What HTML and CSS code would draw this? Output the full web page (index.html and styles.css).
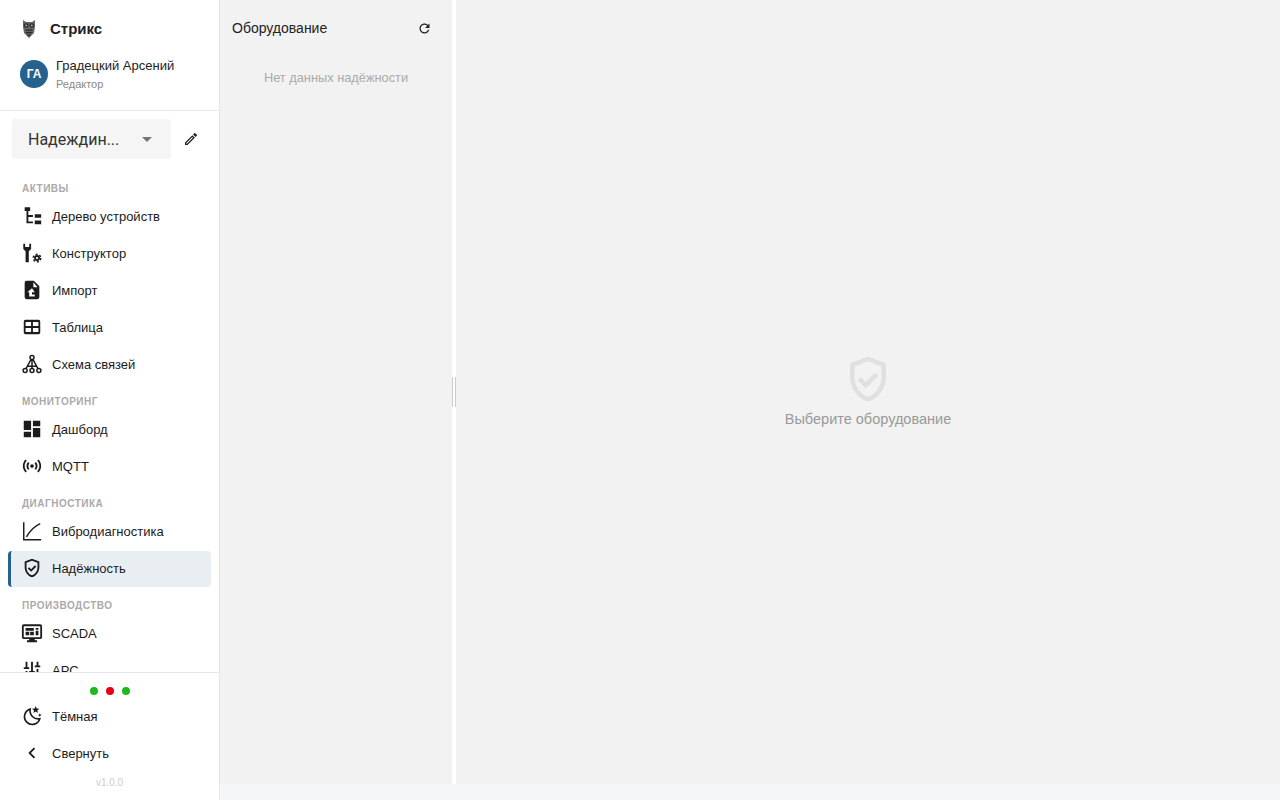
FILE: index.html
```html
<!DOCTYPE html>
<html lang="ru">
<head>
    <meta charset="UTF-8">
    <title>Стрикс</title>
    <link rel="stylesheet" href="styles.css">
</head>
<body>
    <aside class="sidebar">
        <div class="top">
            <div class="brand">
                <svg class="owl" viewBox="0 0 16 20">
                    <path fill="#666" d="M2 1l3 2h6l3-2v7l-1 6-5 5-5-5-1-6z"/>
                    <circle cx="5.200" cy="6.500" r="2.300" fill="#2a2a2a"/>
                    <circle cx="10.800" cy="6.500" r="2.300" fill="#2a2a2a"/>
                    <circle cx="5.200" cy="6.500" r=".9" fill="#bbb"/>
                    <circle cx="10.800" cy="6.500" r=".9" fill="#bbb"/>
                    <path fill="#2a2a2a" d="M4 10.500h8l-1 1.200H5zM4.500 13h7l-1 1.200h-5zM6 15.500h4L8 17.500z"/>
                </svg>
                <span class="brand-name">Стрикс</span>
            </div>
            <div class="user">
                <div class="avatar">ГА</div>
                <div class="user-info">
                    <div class="user-name">Градецкий Арсений</div>
                    <div class="user-role">Редактор</div>
                </div>
            </div>
        </div>

        <div class="plant-row">
            <div class="plant-select">
                <span>Надеждин...</span>
                <i class="caret"></i>
            </div>
            <svg class="edit-icon" viewBox="0 0 24 24"><path d="M14.060 9.020l.92.92L5.920 19H5v-.92l9.060-9.060M17.660 3c-.25 0-.51.1-.7.29l-1.830 1.830 3.750 3.750 1.830-1.830c.39-.39.39-1.020 0-1.410l-2.340-2.340c-.2-.2-.45-.29-.71-.29zm-3.600 3.190L3 17.250V21h3.750L17.810 9.940l-3.750-3.750z"/></svg>
        </div>

        <nav class="nav">
            <div class="nav-label">Активы</div>
            <a class="nav-item">
                <svg class="ico" viewBox="0 0 24 24"><path d="M4 2.500h6v4H8v4.500h5v2H8v5h5v2H6V6.500H4zM15 10h7v4h-7zM15 17h7v4h-7z"/></svg>
                Дерево устройств
            </a>
            <a class="nav-item">
                <svg class="ico" viewBox="0 0 24 24">
                    <path d="M2.500 2v5.500l2.500 2.500v12h3.500V10L11 7.500V2H9v3.500H4.500V2z"/>
                    <circle cx="17.500" cy="17.500" r="2.200" fill="none" stroke="#1c1c1c" stroke-width="2"/>
                    <circle cx="17.500" cy="17.500" r="4" fill="none" stroke="#1c1c1c" stroke-width="1.800" stroke-dasharray="2.200 2"/>
                </svg>
                Конструктор
            </a>
            <a class="nav-item">
                <svg class="ico" viewBox="0 0 24 24"><path fill-rule="evenodd" d="M6 2h8l6 6v12a2 2 0 0 1-2 2H6a2 2 0 0 1-2-2V4a2 2 0 0 1 2-2zM13.500 3.500V9H18zM12 10l-5 4.500h2V19h6v-2h-3v-2.500h3z"/></svg>
                Импорт
            </a>
            <a class="nav-item">
                <svg class="ico" viewBox="0 0 24 24"><path fill-rule="evenodd" d="M5 4h14a2 2 0 0 1 2 2v12a2 2 0 0 1-2 2H5a2 2 0 0 1-2-2V6a2 2 0 0 1 2-2zm0 2.500V11h6V6.500zm8 0V11h6V6.500zM5 13v4.500h6V13zm8 0v4.500h6V13z"/></svg>
                Таблица
            </a>
            <a class="nav-item">
                <svg class="ico ico-line" viewBox="0 0 24 24">
                    <circle cx="12" cy="5" r="2.200"/>
                    <circle cx="4.500" cy="19" r="2.200"/>
                    <circle cx="12" cy="19" r="2.200"/>
                    <circle cx="19.500" cy="19" r="2.200"/>
                    <path d="M11 7L5.500 17M13 7l5.500 10M12 7.200v9.600M7.500 14.500h9"/>
                </svg>
                Схема связей
            </a>

            <div class="nav-label">Мониторинг</div>
            <a class="nav-item">
                <svg class="ico" viewBox="0 0 24 24"><path d="M3 13h8V3H3v10zm0 8h8v-6H3v6zm10 0h8V11h-8v10zm0-18v6h8V3h-8z"/></svg>
                Дашборд
            </a>
            <a class="nav-item">
                <svg class="ico" viewBox="0 0 24 24"><path d="M7.760 16.240C6.670 15.160 6 13.660 6 12s.67-3.160 1.760-4.240l1.420 1.420C8.450 9.900 8 10.900 8 12c0 1.100.45 2.100 1.170 2.830l-1.410 1.410zm8.480 0C17.330 15.160 18 13.660 18 12s-.67-3.160-1.760-4.240l-1.420 1.420C15.550 9.900 16 10.900 16 12c0 1.100-.45 2.100-1.170 2.830l1.410 1.410zM12 10c-1.100 0-2 .9-2 2s.9 2 2 2 2-.9 2-2-.9-2-2-2zm8 2c0 2.210-.9 4.210-2.350 5.650l1.420 1.420C20.880 17.260 22 14.760 22 12s-1.120-5.260-2.930-7.070l-1.420 1.420C19.100 7.790 20 9.790 20 12zM6.350 6.350 4.930 4.930C3.120 6.740 2 9.240 2 12s1.120 5.260 2.930 7.070l1.420-1.420C4.900 16.210 4 14.210 4 12s.9-4.210 2.350-5.650z"/></svg>
                MQTT
            </a>

            <div class="nav-label">Диагностика</div>
            <a class="nav-item">
                <svg class="ico ico-line" viewBox="0 0 24 24">
                    <path d="M3 2.500V21.500h19"/>
                    <path d="M6 18.500C9 13 13 7.500 21 4"/>
                </svg>
                Вибродиагностика
            </a>
            <a class="nav-item active">
                <svg class="ico" viewBox="0 0 24 24"><path d="M12 2 4 5v6.090c0 5.050 3.410 9.760 8 10.910 4.590-1.150 8-5.860 8-10.910V5l-8-3zm6 9.090c0 4-2.550 7.700-6 8.830-3.450-1.130-6-4.820-6-8.830v-4.700l6-2.250 6 2.250v4.700zm-9.180.09L7.400 12.600 11 16.200l5.660-5.660-1.420-1.410-4.240 4.240-2.180-2.190z"/></svg>
                Надёжность
            </a>

            <div class="nav-label">Производство</div>
            <a class="nav-item">
                <svg class="ico" viewBox="0 0 24 24"><path fill-rule="evenodd" d="M3 2.500h18a2 2 0 0 1 2 2v12a2 2 0 0 1-2 2h-6v1.500h2.500v2h-11v-2H9v-1.500H3a2 2 0 0 1-2-2v-12a2 2 0 0 1 2-2zm0 2v12h18v-12zM5 6.500h9v3H5zM5 10.500h4v4H5zM10 10.500h4v4h-4zM16 6.500h3v2h-3zM16 9.500h3v5h-3z"/></svg>
                SCADA
            </a>
            <a class="nav-item">
                <svg class="ico" viewBox="0 0 24 24"><path d="M5 3h2v6h2v2H3V9h2zM5 13h2v8H5zM11 3h2v10h2v2H9v-2h2zM11 17h2v4h-2zM17 3h2v4h2v2h-6V7h2zM17 11h2v10h-2z"/></svg>
                APC
            </a>
        </nav>

        <div class="bottom">
            <div class="status">
                <i class="dot green"></i>
                <i class="dot red"></i>
                <i class="dot green"></i>
            </div>
            <a class="nav-item">
                <svg class="ico" viewBox="0 0 24 24">
                    <path d="M10 4.500a8.500 8.500 0 1 0 10.500 10.500A9 9 0 0 1 10 4.500z" fill="none" stroke="#1c1c1c" stroke-width="1.800"/>
                    <path d="M16 1l1.100 2.800 2.900.2-2.200 1.900.7 2.900-2.500-1.600-2.500 1.600.7-2.900L12 4l2.900-.2zM20.500 9l.6 1.400 1.400.6-1.400.6-.6 1.400-.6-1.400-1.400-.6 1.400-.6z"/>
                </svg>
                Тёмная
            </a>
            <a class="nav-item">
                <svg class="ico" viewBox="0 0 24 24"><path d="M15.410 7.410 14 6l-6 6 6 6 1.410-1.410L10.830 12z"/></svg>
                Свернуть
            </a>
            <div class="version">v1.0.0</div>
        </div>
    </aside>

    <div class="workspace">
        <section class="panel">
            <div class="panel-head">
                <span>Оборудование</span>
                <svg class="refresh" viewBox="0 0 24 24"><path d="M17.650 6.350C16.200 4.900 14.210 4 12 4c-4.420 0-7.990 3.580-7.990 8s3.570 8 7.990 8c3.730 0 6.840-2.550 7.730-6h-2.080c-.82 2.330-3.040 4-5.650 4-3.310 0-6-2.690-6-6s2.690-6 6-6c1.660 0 3.140.69 4.220 1.780L13 11h7V4l-2.350 2.350z"/></svg>
            </div>
            <div class="panel-empty">Нет данных надёжности</div>
        </section>
        <div class="splitter"><i class="grip"></i></div>
        <main class="main">
            <svg class="shield" viewBox="0 0 24 24"><path d="M12 2 4 5v6.090c0 5.050 3.410 9.760 8 10.910 4.590-1.150 8-5.860 8-10.910V5l-8-3zm6 9.090c0 4-2.550 7.700-6 8.830-3.450-1.130-6-4.820-6-8.830v-4.700l6-2.250 6 2.250v4.700zm-9.180.09L7.400 12.600 11 16.200l5.660-5.660-1.420-1.410-4.240 4.240-2.180-2.190z"/></svg>
            <div class="main-text">Выберите оборудование</div>
        </main>
    </div>
</body>
</html>
```

FILE: styles.css
```css
* { box-sizing: border-box; }
html, body { height: 100%; }
body {
    margin: 0; display: flex; height: 800px; overflow: hidden;
    background: #f5f6f8; color: #1c1c1c;
    font-family: "Liberation Sans", Arial, sans-serif; font-size: 13px;
}

.sidebar {
    width: 220px; height: 800px; flex: none; display: flex; flex-direction: column;
    background: #fff; border-right: 1px solid #e6e6e6;
}
.top { height: 111px; padding: 18px 0 0 20px; border-bottom: 1px solid #e6e6e6; }
.brand { display: flex; align-items: center; height: 21px; }
.owl { width: 16px; height: 20px; margin-left: 1px; }
.brand-name { margin-left: 13px; font-size: 15px; font-weight: 700; color: #222; }
.user { display: flex; align-items: center; margin-top: 18px; }
.avatar {
    width: 28px; height: 28px; border-radius: 50%; background: #26628f; color: #fff;
    display: flex; align-items: center; justify-content: center; font-size: 12px; font-weight: 700;
}
.user-info { margin-left: 8px; }
.user-name { font-size: 13px; line-height: 18px; color: #222; }
.user-role { font-size: 11px; line-height: 14px; margin-top: 2px; color: #888; }

.plant-row { display: flex; align-items: center; padding: 8px 0 0 12px; }
.plant-select {
    width: 159px; height: 40px; padding: 0 19px 0 16px; display: flex; align-items: center; justify-content: space-between;
    background: #f5f5f5; border-radius: 4px; font-family: Roboto, sans-serif; font-size: 16px; color: #333;
}
.caret { width: 0; height: 0; border-left: 5px solid transparent; border-right: 5px solid transparent; border-top: 5px solid #757575; }
.edit-icon { width: 16px; height: 16px; margin-left: 12px; fill: #222; }

.nav { flex: 1; min-height: 0; overflow: hidden; padding: 0 8px; }
.nav-label {
    padding: 24px 0 4px 14px; font-size: 10px; line-height: 12px; font-weight: 700;
    color: #aaa; letter-spacing: .5px; text-transform: uppercase;
}
.nav-item + .nav-label { padding-top: 12px; }
.nav-item {
    height: 36px; margin-bottom: 1px; padding: 0 0 2px 10px; display: flex; align-items: center; gap: 9px;
    font-size: 13px; color: #1c1c1c; border-radius: 4px; border-left: 3px solid transparent;
}
.nav-item.active { background: #e9eef3; border-left-color: #26628f; }
.ico { width: 22px; height: 22px; flex: none; fill: #1c1c1c; }
.ico-line { fill: none; stroke: #1c1c1c; stroke-width: 1.6; }

.bottom { height: 128px; padding: 0 8px; border-top: 1px solid #e6e6e6; }
.status { display: flex; justify-content: center; gap: 8px; padding-top: 14px; height: 26px; }
.dot { width: 8px; height: 8px; border-radius: 50%; }
.dot.green { background: #1eb81e; }
.dot.red { background: #e8000f; }
.version { margin-top: 4px; text-align: center; font-size: 10px; line-height: 14px; color: #ccc; }

.workspace { flex: 1; height: 784px; display: flex; }
.panel { width: 232px; flex: none; background: #f2f2f2; padding: 0 12px; }
.panel-head { height: 56px; display: flex; align-items: center; justify-content: space-between; font-size: 14px; color: #222; }
.refresh { width: 15px; height: 15px; margin-right: 8px; fill: #222; }
.panel-empty { margin-top: 14px; text-align: center; font-size: 12.8px; line-height: 16px; color: #aaa; }
.splitter { width: 4px; flex: none; background: #fff; display: flex; align-items: center; }
.grip { width: 4px; height: 30px; border-left: 1px solid #ccc; border-right: 1px solid #ccc; }
.main { flex: 1; padding-bottom: 6px; background: #f2f2f2; display: flex; flex-direction: column; align-items: center; justify-content: center; }
.shield { width: 54px; height: 54px; fill: #e0e0e0; }
.main-text { margin-top: 5px; font-size: 14.5px; line-height: 16px; color: #999; }
```
